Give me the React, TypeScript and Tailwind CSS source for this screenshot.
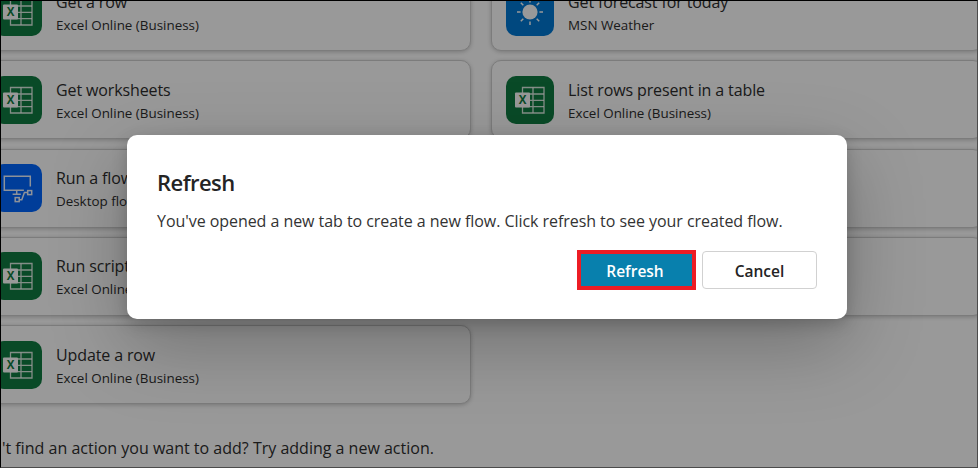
import React from "react";

type Kind = "excel" | "weather" | "desktop";

function ExcelIcon() {
  return (
    <svg viewBox="0 0 48 48" className="size-12 shrink-0 rounded-[10px] bg-[#107c41]">
      <g fill="none" stroke="#fff" strokeOpacity="0.85" strokeWidth="1.3">
        <path d="M16.5 11.5h21.5v25.5h-21.5z" />
        <path d="M27 11.5v25.5M16.5 18h21.5M16.5 24.4h21.5M16.5 30.7h21.5" />
      </g>
      <rect x="9" y="16.5" width="15" height="15" rx="1" fill="#fff" />
      <text x="16.5" y="28.3" textAnchor="middle" fontSize="11.5" fontWeight="700" fill="#107c41">
        X
      </text>
    </svg>
  );
}

function WeatherIcon() {
  return (
    <svg viewBox="0 0 48 48" className="size-12 shrink-0 rounded-[10px] bg-[#0078d4]">
      <circle cx="24" cy="24" r="7.6" fill="#fff" />
      <path
        d="M24 11v3.4M24 33.6V37M11 24h3.6M33.4 24H37M14.8 14.8l2.5 2.5M30.7 30.7l2.5 2.5M14.8 33.2l2.5-2.5M30.7 17.3l2.5-2.5"
        stroke="#fff"
        strokeWidth="1.5"
        fill="none"
      />
    </svg>
  );
}

function DesktopIcon() {
  return (
    <svg viewBox="0 0 48 48" className="size-12 shrink-0 rounded-[10px] bg-[#0066ff]">
      <g fill="none" stroke="#fff" strokeOpacity="0.92" strokeWidth="1.5">
        <path d="M36.3 22.6V12.2H10.3v14h19.6" />
        <path d="M22.7 26.5v3.8M18.6 30.3h8.2" />
        <rect x="33.7" y="26.6" width="4" height="4" />
        <rect x="21.2" y="33.6" width="4" height="4" />
        <path d="M25.3 35.7h2.5l2.6-7.2h3" />
      </g>
    </svg>
  );
}

function ActionCard({ kind, title, sub }: { kind: Kind; title: string; sub: string }) {
  return (
    <div className="flex h-[79px] items-center gap-[14px] rounded-[10px] border border-[#cfcfcf] bg-white px-[14px] shadow-[0_1px_4px_rgba(0,0,0,0.22)]">
      {kind === "excel" && <ExcelIcon />}
      {kind === "weather" && <WeatherIcon />}
      {kind === "desktop" && <DesktopIcon />}
      <div className="flex flex-col whitespace-nowrap pt-[2px] text-[#2e2e2e]">
        <span className="text-[16px] leading-[24px] tracking-[-0.12px]">{title}</span>
        <span className="text-[13.4px] leading-[22px]">{sub}</span>
      </div>
    </div>
  );
}

const left: { kind: Kind; title: string; sub: string }[] = [
  { kind: "excel", title: "Get a row", sub: "Excel Online (Business)" },
  { kind: "excel", title: "Get worksheets", sub: "Excel Online (Business)" },
  { kind: "desktop", title: "Run a flow", sub: "Desktop flows" },
  { kind: "excel", title: "Run script", sub: "Excel Online (Business)" },
  { kind: "excel", title: "Update a row", sub: "Excel Online (Business)" },
];

const right: { kind: Kind; title: string; sub: string }[] = [
  { kind: "weather", title: "Get forecast for today", sub: "MSN Weather" },
  { kind: "excel", title: "List rows present in a table", sub: "Excel Online (Business)" },
];

export default function App() {
  return (
    <div className="relative h-[468px] w-[978px] overflow-hidden bg-white font-['Open_Sans','Noto_Sans',sans-serif]">
      <div className="-ml-[21px] -mt-[28px] grid w-[1004px] grid-cols-2 gap-5">
        <div className="flex flex-col gap-[9.3px]">
          {left.map((c) => (
            <ActionCard key={c.title} {...c} />
          ))}
        </div>
        <div className="flex flex-col gap-[9.3px]">
          {right.map((c) => (
            <ActionCard key={c.title} {...c} />
          ))}
          <div className="h-[79px] rounded-[10px] border border-[#cfcfcf] bg-white shadow-[0_1px_4px_rgba(0,0,0,0.22)]" />
          <div className="h-[79px] rounded-[10px] border border-[#cfcfcf] bg-white shadow-[0_1px_4px_rgba(0,0,0,0.22)]" />
        </div>
      </div>
      <p className="mt-[32px] ml-[2px] whitespace-nowrap text-[16px] leading-6 text-[#2e2e2e]">
        't find an action you want to add? Try adding a new action.
      </p>

      <div className="absolute inset-0 flex items-start justify-center bg-black/40 pt-[135px] pr-[4px]">
        <div className="h-[184px] w-[720px] rounded-[10px] bg-white px-[30px] pt-[31px] text-[#242424] shadow-[0_26px_76px_rgba(0,0,0,0.26),0_5px_16px_rgba(0,0,0,0.18)]">
          <h1 className="text-[22px] font-semibold leading-[32px] tracking-[-0.55px]">Refresh</h1>
          <p className="mt-[11px] whitespace-nowrap text-[16px] leading-6 tracking-[-0.05px] text-[#333]">
            You've opened a new tab to create a new flow. Click refresh to see your created flow.
          </p>
          <div className="mt-[17px] flex items-center justify-end gap-[6px] text-[15.5px] font-semibold">
            <button className="h-[40px] w-[119px] border-4 border-[#ed1c24] bg-[#0880ad] pt-[3px] pr-[3px] text-white">
              Refresh
            </button>
            <button className="h-[38px] w-[115px] rounded-[4px] border border-[#d1d1d1] bg-white pt-[3px]">
              Cancel
            </button>
          </div>
        </div>
      </div>
      <div className="pointer-events-none absolute inset-0 border border-t-black border-r-[#4b4b4b] border-b-[#4b4b4b] border-l-black" />
    </div>
  );
}
